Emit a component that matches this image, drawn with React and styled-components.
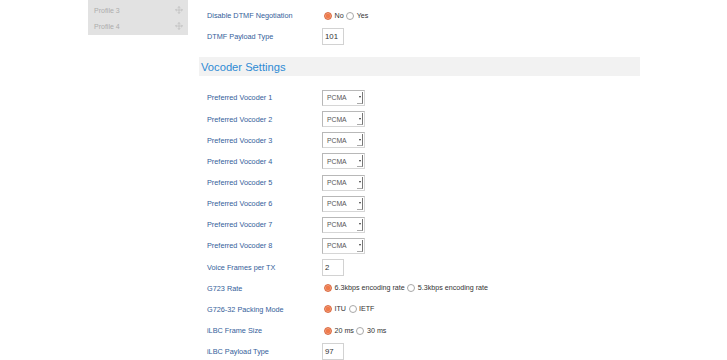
import styled, { createGlobalStyle } from "styled-components";
import { Move } from "lucide-react";

const GlobalStyle = createGlobalStyle`
  html, body {
    margin: 0;
    padding: 0;
    background: #ffffff;
    font-family: "Liberation Sans", Arial, sans-serif;
    overflow: hidden;
  }
`;

//#region layout
const Page = styled.div`
  display: flex;
  align-items: flex-start;
  width: 727px;
  height: 360px;
  overflow: hidden;
`;

const Sidebar = styled.div`
  margin-left: 88px;
  width: 100px;
  padding: 2px 0 1px;
  background-color: #e2e2e2;
  display: flex;
  flex-direction: column;
`;

const SideItem = styled.div`
  height: 16px;
  display: flex;
  align-items: center;
  justify-content: space-between;
  padding: 0 5px 0 6px;
  font-size: 7px;
  color: #adadad;
`;

const Main = styled.div`
  margin-left: 11px;
  width: 441px;
  padding-top: 5px;
  display: flex;
  flex-direction: column;
`;

const Row = styled.div`
  height: 21.17px;
  display: flex;
  align-items: center;
  padding-left: 8px;
`;

const Label = styled.div`
  width: 115px;
  flex-shrink: 0;
  font-size: 7.3px;
  color: #34609a;
`;

const SectionHeader = styled.div`
  margin: ${(p) => p.$mt}px 0 11px;
  height: 19px;
  display: flex;
  align-items: center;
  padding-left: 2px;
  background-color: #f2f2f2;
  font-size: 11.2px;
  color: #2e8ad4;
`;
//#endregion

//#region controls
const TextBox = styled.div`
  width: ${(p) => p.$w}px;
  height: 17px;
  box-sizing: border-box;
  border: 1px solid #d2d2d2;
  display: flex;
  align-items: center;
  padding-left: 2px;
  font-size: 7.8px;
  color: #333;
`;

const SelectBox = styled.div`
  width: 43px;
  height: 16px;
  box-sizing: border-box;
  border: 1px solid #b8b8b8;
  border-right-color: #d6d6d6;
  border-bottom-color: #d6d6d6;
  display: flex;
  align-items: center;
  justify-content: space-between;
  padding-left: 4px;
  font-size: 6.8px;
  color: #555;
`;

const Arrow = styled.span`
  width: 5px;
  height: 11px;
  margin-right: 1px;
  display: flex;
  align-items: center;
  justify-content: center;
  border-right: 1px solid #777;
  border-bottom: 1px solid #aaa;
  &::after {
    content: "";
    border-left: 1.5px solid transparent;
    border-right: 1.5px solid transparent;
    border-top: 2px solid #333;
  }
`;

const RadioGroup = styled.div`
  display: flex;
  align-items: center;
  gap: 2.5px;
  font-size: 7.15px;
  color: #333;
`;

const Dot = styled.span`
  width: 8px;
  height: 8px;
  box-sizing: border-box;
  border-radius: 50%;
  margin-left: ${(p) => (p.$first ? 2 : 0)}px;
  border: 1px solid ${(p) => (p.$on ? "#d9693f" : "#a8a8a8")};
  background: ${(p) =>
    p.$on ? "radial-gradient(circle, #f07a4a 0 45%, #f3a07f 60%, #e57a52 100%)" : "#fff"};
`;
//#endregion

const vocoders = [1, 2, 3, 4, 5, 6, 7, 8];

function Radios({ options, selected }) {
  return (
    <RadioGroup>
      {options.map((o, i) => (
        <RadioGroup key={o}>
          <Dot $on={i === selected} $first={i === 0} />
          <span>{o}</span>
        </RadioGroup>
      ))}
    </RadioGroup>
  );
}

export default function App() {
  return (
    <>
      <GlobalStyle />
      <Page>
        <Sidebar>
          {["Profile 3", "Profile 4"].map((p) => (
            <SideItem key={p}>
              <span>{p}</span>
              <Move size={8} color="#bdbdbd" strokeWidth={2} />
            </SideItem>
          ))}
        </Sidebar>

        <Main>
          <Row>
            <Label>Disable DTMF Negotiation</Label>
            <Radios options={["No", "Yes"]} selected={0} />
          </Row>
          <Row>
            <Label>DTMF Payload Type</Label>
            <TextBox $w={22}>101</TextBox>
          </Row>

          <SectionHeader $mt={10}>Vocoder Settings</SectionHeader>

          {vocoders.map((n) => (
            <Row key={n}>
              <Label>Preferred Vocoder {n}</Label>
              <SelectBox>
                PCMA
                <Arrow />
              </SelectBox>
            </Row>
          ))}
          <Row>
            <Label>Voice Frames per TX</Label>
            <TextBox $w={22}>2</TextBox>
          </Row>
          <Row>
            <Label>G723 Rate</Label>
            <Radios options={["6.3kbps encoding rate", "5.3kbps encoding rate"]} selected={0} />
          </Row>
          <Row>
            <Label>G726-32 Packing Mode</Label>
            <Radios options={["ITU", "IETF"]} selected={0} />
          </Row>
          <Row>
            <Label>iLBC Frame Size</Label>
            <Radios options={["20 ms", "30 ms"]} selected={0} />
          </Row>
          <Row>
            <Label>iLBC Payload Type</Label>
            <TextBox $w={22}>97</TextBox>
          </Row>
        </Main>
      </Page>
    </>
  );
}
